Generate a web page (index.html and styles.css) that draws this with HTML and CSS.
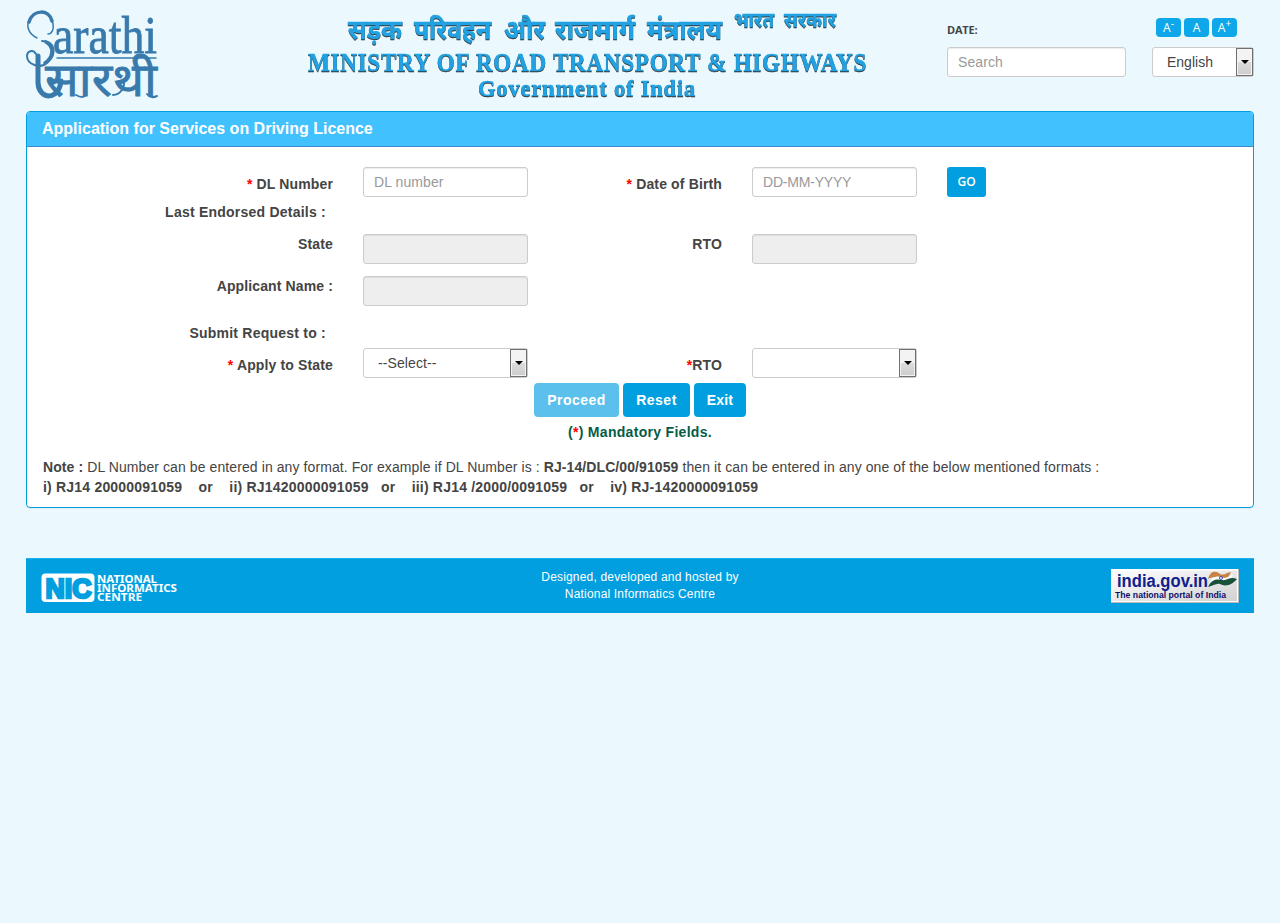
FILE: index.html
```html
<!DOCTYPE html>
<html lang="en">
<head>
<meta charset="utf-8">
<title>Application for Services on Driving Licence</title>
<link rel="stylesheet" href="styles.css">
</head>
<body>
<header class="header">
  <svg class="logo" width="134" height="92" viewBox="0 0 134 92" role="img" aria-label="Sarathi">
    <g class="logo-swash">
      <path d="M11 29C3 25 0 18 3 11C8 0 25 0 27 15C28 20 26 25 22 25" stroke-width="1.5"/>
      <path d="M3 13C7 0 23 0 26 12" stroke-width="3.5"/>
      <path d="M16 32C29 32 31 45 22 53C14 61 1 55 1 47C1 42 7 40 10 45" stroke-width="2"/>
      <path d="M20 33C29 38 27 49 19 54" stroke-width="3.5"/>
      <path d="M31 49H130" stroke-width="1.5"/>
      <path d="M12 47V74C13 91 33 92 35 72" stroke-width="5"/>
      <path d="M17 86C27 91 34 83 36 71M60 86Q57 90 50 86M87 86C94 86 99 79 98 71M131 87Q125 90 121 85" stroke-width="2"/>
    </g>
    <text class="logo-latin" x="27" y="44" textLength="104" lengthAdjust="spacingAndGlyphs">arathi</text>
    <text class="logo-hindi" x="19" y="87" textLength="112" lengthAdjust="spacingAndGlyphs">सारथी</text>
  </svg>
  <svg class="ministry" width="570" height="104" viewBox="0 0 570 104">
    <text class="hindi" x="46" y="39" textLength="54" lengthAdjust="spacingAndGlyphs">सड़क</text>
    <text class="hindi" x="112" y="39" textLength="77" lengthAdjust="spacingAndGlyphs">परिवहन</text>
    <text class="hindi" x="202" y="39" textLength="41" lengthAdjust="spacingAndGlyphs">और</text>
    <text class="hindi" x="253" y="39" textLength="80" lengthAdjust="spacingAndGlyphs">राजमार्ग</text>
    <text class="hindi" x="345" y="39" textLength="75" lengthAdjust="spacingAndGlyphs">मंत्रालय</text>
    <text class="hindi small" x="432" y="27" textLength="40" lengthAdjust="spacingAndGlyphs">भारत</text>
    <text class="hindi small" x="482" y="27" textLength="52" lengthAdjust="spacingAndGlyphs">सरकार</text>
    <text class="english" x="6" y="71" textLength="559" lengthAdjust="spacingAndGlyphs">MINISTRY OF ROAD TRANSPORT &amp; HIGHWAYS</text>
    <text class="english gov" x="176" y="96" textLength="218" lengthAdjust="spacingAndGlyphs">Government of India</text>
  </svg>
  <div class="date-search">
    <div class="date">DATE:</div>
    <input class="field" type="text" placeholder="Search">
  </div>
  <div class="tools">
    <div class="sizes"><button class="size">A<sup>-</sup></button><button class="size">A</button><button class="size">A<sup>+</sup></button></div>
    <div class="field select"><span>English</span><i class="arrow"></i></div>
  </div>
</header>

<main class="panel">
  <h1 class="panel-title">Application for Services on Driving Licence</h1>
  <form class="form">
    <label class="label label-top"><span class="req">*</span> DL Number</label>
    <input class="field" type="text" placeholder="DL number">
    <label class="label label-top"><span class="req">*</span> Date of Birth</label>
    <input class="field" type="text" placeholder="DD-MM-YYYY">
    <button class="go" type="button">GO</button>

    <div class="label section">Last Endorsed Details :</div>

    <label class="label">State</label>
    <input class="field" type="text" disabled>
    <label class="label">RTO</label>
    <input class="field" type="text" disabled>

    <label class="label name-label">Applicant Name :</label>
    <input class="field name-field" type="text" disabled>

    <div class="label section submit">Submit Request to :</div>

    <label class="label label-top"><span class="req">*</span> Apply to State</label>
    <div class="field select"><span>--Select--</span><i class="arrow"></i></div>
    <label class="label label-top"><span class="req">*</span>RTO</label>
    <div class="field select"><span></span><i class="arrow"></i></div>
  </form>
  <div class="actions">
    <button class="btn disabled">Proceed</button><button class="btn">Reset</button><button class="btn">Exit</button>
  </div>
  <p class="mandatory">(<span class="req">*</span>) Mandatory Fields.</p>
  <div class="note">
    <div class="note-text"><b>Note :</b> DL Number can be entered in any format. For example if DL Number is : <b>RJ-14/DLC/00/91059</b> then it can be entered in any one of the below mentioned formats :</div>
    <div class="formats">i) RJ14 20000091059 &nbsp;&nbsp; or &nbsp;&nbsp; ii) RJ1420000091059 &nbsp; or &nbsp;&nbsp; iii) RJ14 /2000/0091059 &nbsp; or &nbsp;&nbsp; iv) RJ-1420000091059</div>
  </div>
</main>

<footer class="footer">
  <svg class="nic" width="138" height="30" viewBox="0 0 138 30">
    <rect x="1.5" y="1.500" width="51" height="26" rx="3" fill="#fff"/>
    <rect x="1.500" y="1.500" width="51" height="26.500" rx="3" fill="none" stroke="#fff" stroke-width="2"/>
    <text class="nic-mark" x="4.500" y="24.500" textLength="46" lengthAdjust="spacingAndGlyphs">NIC</text>
    <text class="nic-text" x="56" y="9.500" textLength="60" lengthAdjust="spacingAndGlyphs">NATIONAL</text>
    <text class="nic-text" x="56" y="18.500" textLength="80" lengthAdjust="spacingAndGlyphs">INFORMATICS</text>
    <text class="nic-text" x="56" y="27.500" textLength="45" lengthAdjust="spacingAndGlyphs">CENTRE</text>
  </svg>
  <div class="credit">Designed, developed and hosted by<br>National Informatics Centre</div>
  <svg class="portal" width="128" height="34" viewBox="0 0 128 34">
    <defs><linearGradient id="silver" x2="1" y2="1"><stop stop-color="#fff"/><stop offset="1" stop-color="#d2d2d2"/></linearGradient></defs>
    <rect width="128" height="34" fill="#b9b9b9"/>
    <rect width="127" height="33" fill="#fff"/>
    <rect x="1.5" y="1.5" width="124.500" height="30.500" fill="url(#silver)"/>
    <text class="portal-name" x="6" y="18" textLength="91" lengthAdjust="spacingAndGlyphs">india.gov.in</text>
    <text class="portal-sub" x="4" y="29" textLength="111" lengthAdjust="spacingAndGlyphs">The national portal of India</text>
    <path d="M97 10C100 1 105 2 109 5C113 7 116 3 120 3L117 9C110 12 105 5 97 10Z" fill="#c98245"/>
    <path d="M99 13C104 5 109 8 113 9C117 9 119 6 122 6L118 12C111 15 106 8 99 13Z" fill="#fff"/>
    <path d="M97 18C101 10 106 10 111 11C116 12 119 7 126 10C119 18 113 17 109 15C105 14 102 17 97 18Z" fill="#185038"/>
    <circle cx="110" cy="9" r="1.500" fill="none" stroke="#3b4db0"/>
  </svg>
</footer>
</body>
</html>
```
FILE: styles.css
```css
* { box-sizing: border-box; }
body {
  margin: 0;
  padding: 0 26px;
  background: #ebf9ff;
  color: #444;
  font: 14px/20px "Liberation Sans", Arial, sans-serif;
}
button, input { font-family: inherit; margin: 0; }

.header {
  height: 111px;
  display: grid;
  grid-template-columns: 276px 645px 205px 102px;
  align-items: start;
}
.logo { margin-top: 9px; overflow: visible; }
.logo-swash { fill: none; stroke: #397aac; stroke-linecap: round; }
.logo text { fill: #397aac; stroke: #397aac; stroke-width: .8px; }
.logo-latin { font: 53px "Liberation Serif", serif; }
.logo-hindi { font: 46px "Noto Sans Devanagari", "Noto Sans", sans-serif; }

.ministry { overflow: visible; }
.ministry text { fill: #22a2e2; filter: drop-shadow(.5px 1px .7px #333); }
.ministry .hindi { font: bold 27px "Noto Sans Devanagari", "Noto Sans", sans-serif; stroke: #22a2e2; stroke-width: .3px; }
.ministry .small { font-size: 20px; }
.ministry .english { font: bold 26px "Liberation Serif", serif; letter-spacing: .8px; stroke: #22a2e2; stroke-width: .35px; }
.ministry .gov { font-size: 24px; }

.date {
  height: 20px;
  margin: 20px 0 7px;
  font: bold 11px/20px "Open Sans", sans-serif;
  letter-spacing: -.2px;
}
.date-search .field { width: 179px; }
.sizes { display: flex; gap: 3px; padding: 18px 0 10px 4px; }
.size {
  width: 25px;
  height: 19px;
  padding: 0;
  border: 0;
  border-radius: 4px;
  background: #0ea8ea;
  color: #fff;
  font: 12px/18px "Open Sans", sans-serif;
}
.size sup { font-size: 10px; line-height: 0; }

.field {
  display: block;
  width: 165px;
  height: 30px;
  padding: 0 10px;
  border: 1px solid #ccc;
  border-radius: 3px;
  background: #fff;
  color: #444;
  font-size: 14px;
  letter-spacing: .1px;
  box-shadow: inset 0 1px 1px rgba(0, 0, 0, .075);
}
.field::placeholder { color: #999; }
.field[placeholder^="DD"] { letter-spacing: -.2px; }
.field:disabled { background: #eee; }
.select {
  display: flex;
  justify-content: space-between;
  padding: 0 0 0 14px;
  line-height: 28px;
  box-shadow: none;
}
.tools .select { width: 102px; letter-spacing: 0; }
.arrow {
  display: grid;
  place-items: center;
  width: 17px;
  height: 28px;
  border: 1px solid #707070;
  background: linear-gradient(#f3f3f3 50%, #dcdcdc 50%, #cdcdcd);
  box-shadow: inset 0 0 0 1px #f3f3f3;
}
.arrow::before {
  content: "";
  border: 4px solid transparent;
  border-top-color: #000;
  border-bottom: 0;
}

.panel {
  height: 397px;
  border: 1px solid #029fe0;
  border-radius: 4px;
  background: #fff;
  box-shadow: 0 1px 1px rgba(0, 0, 0, .05);
}
.panel-title {
  height: 35px;
  margin: 0;
  padding-left: 15px;
  border-bottom: 1px solid #428bca;
  border-radius: 3px 3px 0 0;
  background: #41c2ff;
  color: #fff;
  font-size: 16px;
  line-height: 33px;
}
.form {
  display: grid;
  grid-template-columns: 306px 165px 164px 165px 39px;
  grid-template-rows: 30px 37px 30px 42px 42px 30px;
  column-gap: 30px;
  padding-top: 20px;
}
.label { font-weight: bold; text-align: right; white-space: nowrap; letter-spacing: .14px; }
.label-top { padding-top: 7px; }
.req { color: #f00; }
.section { grid-column: 1; padding: 5px 7px 0 0; letter-spacing: .23px; }
.submit { padding-top: 17px; }
.form .section + .label { grid-column: 1; }
.name-label { grid-column: 1; padding-top: 12px; letter-spacing: .12px; }
.name-field { margin-top: 12px; }
.go {
  border: 0;
  border-radius: 3px;
  background: #029fe0;
  color: #fff;
  padding: 0;
  font: 600 12px/30px "Open Sans", sans-serif;
}
.actions { display: flex; justify-content: center; gap: 4px; margin-top: 5px; }
.btn {
  width: 67px;
  height: 34px;
  padding: 0;
  border: 0;
  border-radius: 4px;
  background: #029fe0;
  color: #fff;
  font-size: 14px;
  font-weight: bold;
  letter-spacing: .5px;
}
.btn:last-child { width: 52px; letter-spacing: .2px; }
.btn.disabled { width: 85px; background: #5bc0eb; }
.mandatory { margin: 5px 0 15px; text-align: center; color: #055c46; font-weight: bold; letter-spacing: .3px; }
.note { padding-left: 16px; white-space: nowrap; letter-spacing: .09px; }
.formats { font-weight: bold; letter-spacing: .2px; }

.footer {
  display: grid;
  grid-template-columns: 1fr 1fr 1fr;
  align-items: start;
  height: 55px;
  margin-top: 50px;
  padding: 0 15px;
  border-top: 1px solid #1bb4f2;
  background: #029fe0;
}
.nic { margin-top: 14px; overflow: visible; }
.nic-mark { fill: #029fe0; stroke: #029fe0; stroke-width: 2.5px; font: bold 27px "Liberation Sans", sans-serif; }
.nic-text { fill: #fff; font: bold 11px "Noto Sans", sans-serif; }
.credit { padding-top: 10px; color: #fff; text-align: center; font-size: 12px; line-height: 17px; letter-spacing: .18px; }
.portal { justify-self: end; margin-top: 10px; }
.portal-name { fill: #10208c; font: bold 18px "Liberation Sans", sans-serif; }
.portal-sub { fill: #10106c; font: bold 8.5px "Liberation Sans", sans-serif; }
```
